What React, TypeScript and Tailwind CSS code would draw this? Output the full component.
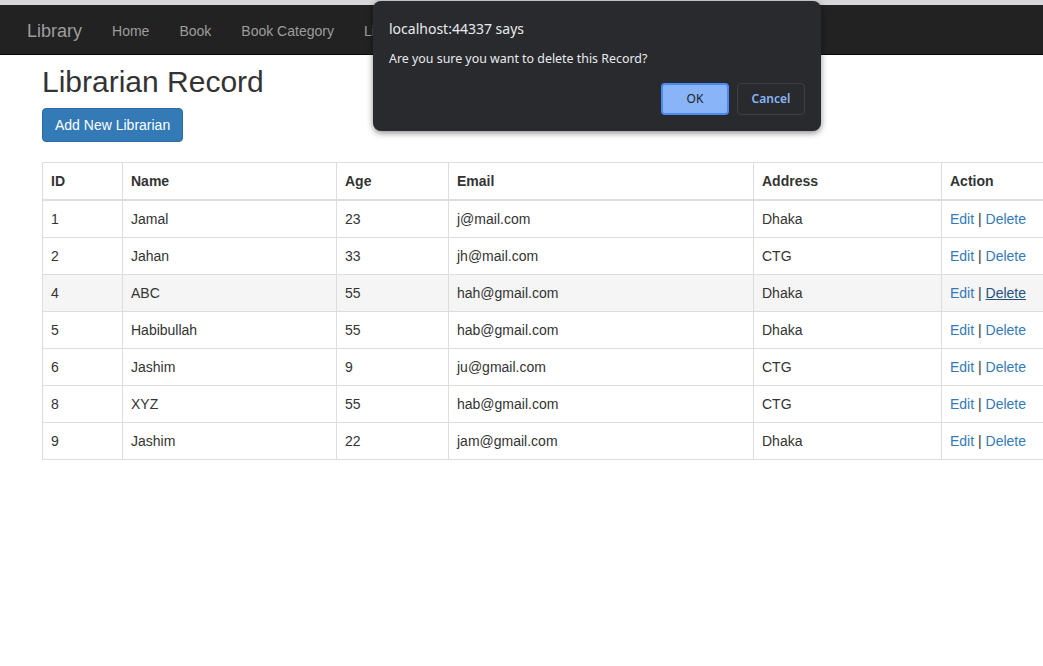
import { FC } from "react";

type Librarian = {
  id: number;
  name: string;
  age: number;
  email: string;
  address: string;
};

const librarians: Librarian[] = [
  { id: 1, name: "Jamal", age: 23, email: "j@mail.com", address: "Dhaka" },
  { id: 2, name: "Jahan", age: 33, email: "jh@mail.com", address: "CTG" },
  { id: 4, name: "ABC", age: 55, email: "hah@gmail.com", address: "Dhaka" },
  { id: 5, name: "Habibullah", age: 55, email: "hab@gmail.com", address: "Dhaka" },
  { id: 6, name: "Jashim", age: 9, email: "ju@gmail.com", address: "CTG" },
  { id: 8, name: "XYZ", age: 55, email: "hab@gmail.com", address: "CTG" },
  { id: 9, name: "Jashim", age: 22, email: "jam@gmail.com", address: "Dhaka" },
];

const navLinks = ["Home", "Book", "Book Category", "Librarian"];

const Navbar: FC = () => (
  <nav className="flex h-[50px] items-center border-b border-[#080808] bg-[#222222] pl-[12px] pt-[2px]">
    <a className="px-[15px] text-[18px] leading-[20px] text-[#9d9d9d]">Library</a>
    {navLinks.map((link) => (
      <a key={link} className="px-[15px] text-[14px] leading-[20px] text-[#9d9d9d]">
        {link}
      </a>
    ))}
  </nav>
);

const ConfirmDialog: FC = () => (
  <div
    className="absolute left-[373px] top-[1px] h-[130px] w-[448px] rounded-[8px] bg-[#292a2d] pl-[16px] pr-[16px] shadow-[0_2px_6px_rgba(0,0,0,0.45)]"
    style={{ fontFamily: '"Noto Sans", "Open Sans", sans-serif' }}
  >
    <div className="pt-[17px] text-[14px] leading-[22px] text-[#e8eaed]">localhost:44337 says</div>
    <div className="mt-[10px] text-[12.4px] leading-[18px] text-[#e8eaed]">
      Are you sure you want to delete this Record?
    </div>
    <div className="mt-[15px] flex justify-end gap-[8px]">
      <button className="h-[32px] w-[68px] rounded-[4px] border-2 border-[#4a8af4] bg-[#8ab4f8] text-[12px] text-[#202124]">
        OK
      </button>
      <button className="h-[32px] w-[68px] rounded-[4px] border border-[#3c4043] bg-transparent text-[12px] font-semibold text-[#8ab4f8]">
        Cancel
      </button>
    </div>
  </div>
);

const cols = ["w-[80px]", "w-[214px]", "w-[112px]", "w-[305px]", "w-[188px]", "w-[120px]"];

const LibrarianTable: FC = () => (
  <table className="mt-[20px] w-[1019px] table-fixed border-collapse border border-[#dddddd] text-[14px] leading-[20px] text-[#333333]">
    <colgroup>
      {cols.map((c) => (
        <col key={c} className={c} />
      ))}
    </colgroup>
    <thead>
      <tr>
        {["ID", "Name", "Age", "Email", "Address", "Action"].map((h) => (
          <th key={h} className="border border-b-2 border-[#dddddd] px-[8px] py-[8px] text-left font-bold">
            {h}
          </th>
        ))}
      </tr>
    </thead>
    <tbody>
      {librarians.map((l) => {
        const hovered = l.id === 4;
        return (
          <tr key={l.id} className={hovered ? "bg-[#f5f5f5]" : ""}>
            <td className="border border-[#dddddd] p-[8px]">{l.id}</td>
            <td className="border border-[#dddddd] p-[8px]">{l.name}</td>
            <td className="border border-[#dddddd] p-[8px]">{l.age}</td>
            <td className="border border-[#dddddd] p-[8px]">{l.email}</td>
            <td className="border border-[#dddddd] p-[8px]">{l.address}</td>
            <td className="whitespace-nowrap border border-[#dddddd] p-[8px]">
              <a className="text-[#337ab7]">Edit</a> |{" "}
              <a className={hovered ? "text-[#23527c] underline" : "text-[#337ab7]"}>Delete</a>
            </td>
          </tr>
        );
      })}
    </tbody>
  </table>
);

export default function App() {
  return (
    <div
      className="relative h-[666px] w-[1043px] overflow-hidden bg-white"
      style={{ fontFamily: '"Liberation Sans", Arial, sans-serif' }}
    >
      <div className="h-[5px] bg-[#d7d7da]" />
      <Navbar />
      <main className="pl-[42px]">
        <h1 className="mt-[10px] mb-[10px] text-[30px] leading-[33px] text-[#333333]">Librarian Record</h1>
        <button className="h-[34px] rounded-[4px] border border-[#2e6da4] bg-[#337ab7] px-[12px] text-[14px] text-white">
          Add New Librarian
        </button>
        <LibrarianTable />
      </main>
      <ConfirmDialog />
    </div>
  );
}
